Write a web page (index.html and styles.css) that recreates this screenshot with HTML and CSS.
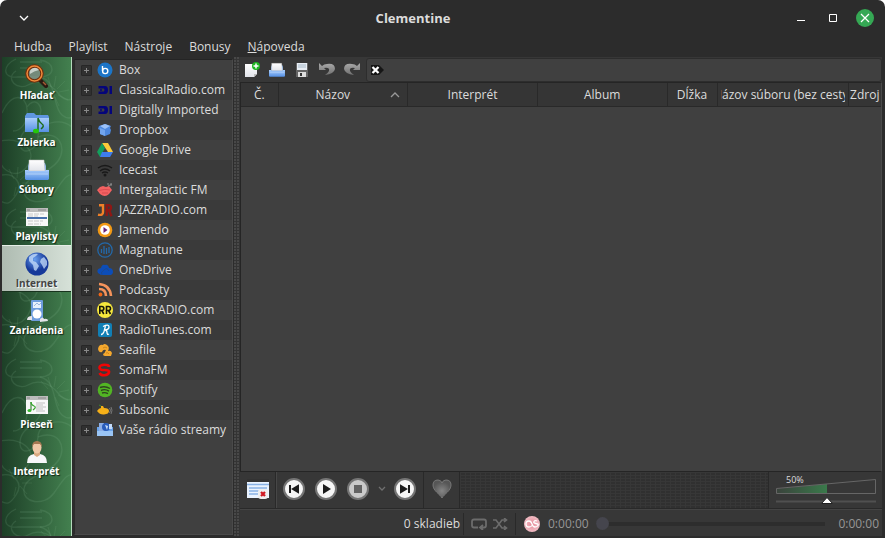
FILE: index.html
```html
<!DOCTYPE html>
<html lang="sk">
<head>
<meta charset="utf-8">
<title>Clementine</title>
<link rel="stylesheet" href="styles.css">
</head>
<body>
<svg class="defs" aria-hidden="true">
  <defs>
    <linearGradient id="blue" x2="0" y2="1"><stop stop-color="#a9cdfb"/><stop offset="1" stop-color="#5590e4"/></linearGradient>
    <linearGradient id="paper" x2="0" y2="1"><stop stop-color="#fff"/><stop offset="1" stop-color="#e2e4ea"/></linearGradient>
    <linearGradient id="grey" x2="0" y2="1"><stop stop-color="#aaa"/><stop offset="1" stop-color="#707070"/></linearGradient>
    <linearGradient id="vol"><stop stop-color="#3a433c"/><stop offset="1" stop-color="#3a7a4b"/></linearGradient>
    <radialGradient id="globe" cx=".4" cy=".3"><stop stop-color="#6aa0ee"/><stop offset="1" stop-color="#16399a"/></radialGradient>
    <radialGradient id="heart" cy=".6"><stop stop-color="#868686"/><stop offset="1" stop-color="#565656"/></radialGradient>
    <radialGradient id="pink"><stop stop-color="#e58a98"/><stop offset="1" stop-color="#f1bcc4"/></radialGradient>
    <pattern id="swirl" width="70" height="150" patternUnits="userSpaceOnUse">
      <g fill="none" stroke="#8ac49a" stroke-opacity=".15" stroke-width="1.3">
        <path d="M14 2C0 8 0 22 16 20h22c16 0 16-15 0-17M14 14c-12 8 2 20 12 14s22-2 30 8 14 8 20 0M18 5h22M18 11h22"/>
        <path d="M38 20c18 4 12 30 22 38s16-2 14-12M0 56c10-22 24-18 25-4s-6 22-14 22M25 50c8-12 18 0 12 10S18 72 18 86s18 8 18-6 22-20 34-10"/>
        <path d="M-2 84c20-4 38 8 28 24s-26 6-28-4M36 80c20-8 30 10 20 24s-32 14-34 28 20 18 30 4 12-20 22-18M0 118c12-2 22 8 14 20s-10 8-16 6"/>
      </g>
      <g fill="none" stroke="#8ac49a" stroke-opacity=".12">
        <path d="M46 32l-7-8m10 6-3-10m6 10 2-11m1 13 8-8m-6 11 10-2m-11 5 10 5m-13-3 4 9M12 122l-5-10m8 9 1-11m2 13 8-7m-6 10 10 0m-12 3 7 8m-11-7-2 9"/>
      </g>
    </pattern>
    <symbol id="i-tray" viewBox="0 0 24 24"><path d="M3 8 4 5h16l1 3v5H3z" fill="#8db6ea"/><path d="M4 2h15l1 11H4z" fill="url(#paper)" stroke="#bbb" stroke-width=".5"/><path d="M0 12h3l1 1h16l1-1h3v9l-1 1H1l-1-1z" fill="url(#blue)"/><path d="M1 16h22" stroke="#c4dcfc" stroke-width=".7"/></symbol>
    <symbol id="i-di" viewBox="0 0 16 16"><path d="M1.500 4H8q3 0 3 4t-3 4H1.500V9.500H7q1-1.500 0-3H1.500zM12.500 4H15v8h-2.500z" fill="#05057a"/><path d="M3 7.300h2v1.400H3z" fill="#05057a"/></symbol>
  </defs>
</svg>
<div class="window">
  <header class="titlebar">
    <button class="plain" aria-label="Menu okna"><svg width="10" height="6" viewBox="0 0 10 6"><path d="M1 1l4 4 4-4" fill="none" stroke="#fff" stroke-width="1.3"/></svg></button>
    <h1>Clementine</h1>
    <div class="winbuttons">
      <button class="plain" aria-label="Minimalizovať"><svg width="8" height="8"><path d="M0 6.500h8" stroke="#fff"/></svg></button>
      <button class="plain" aria-label="Maximalizovať"><svg width="8" height="8"><path d="M.5.5h7v7h-7z" fill="none" stroke="#fff"/></svg></button>
      <button class="plain" aria-label="Zavrieť"><svg width="18" height="18"><circle cx="9" cy="9" r="9" fill="#35a854"/><path d="M5 5l8 8M13 5l-8 8" stroke="#fff" stroke-width="1.2"/></svg></button>
    </div>
  </header>
  <nav class="menubar">
    <button>Hudba</button><button>Playlist</button><button>Nástroje</button><button>Bonusy</button><button><u>N</u>ápoveda</button>
  </nav>
  <div class="main">
    <nav class="sidebar">
      <svg class="swirls" aria-hidden="true"><rect width="100%" height="100%" fill="url(#swirl)"/></svg>
      <button class="tab"><svg viewBox="0 0 24 24"><path d="M15 16l6 6" stroke="#2a1b12" stroke-width="4" stroke-linecap="round"/><path d="M18 18l3 3" stroke="#a45c35" stroke-width="1.500"/><circle cx="9.500" cy="9.500" r="7.500" fill="#9aa29c" fill-opacity=".65" stroke="#6e2c0b" stroke-width="3.500"/><circle cx="9.500" cy="9.500" r="7.500" fill="none" stroke="#ee8a3a" stroke-width="1.500"/><path d="M5 10a5 5 0 0 1 9-4q-5 1-9 4" fill="#fff" opacity=".6"/></svg><span>Hľadať</span></button>
      <button class="tab"><svg viewBox="0 0 24 24"><path d="M0 5l2-3h7l2 2h12l1 2v14l-1 1H1l-1-1z" fill="#5f96df"/><path d="M0 7h24v14H0z" fill="url(#blue)"/><path d="M13 7v12M13 7q1 4 4 6t-1 5" fill="none" stroke="#1d6a16" stroke-width="1.400"/><ellipse cx="11" cy="20" rx="3" ry="2.300" fill="#25c80b"/></svg><span>Zbierka</span></button>
      <button class="tab"><svg viewBox="0 0 24 24"><use href="#i-tray"/></svg><span>Súbory</span></button>
      <button class="tab"><svg viewBox="0 0 24 24"><path d="M1 3h22v18H1z" fill="#f8f8f8"/><path d="M1 3h22v4H1z" fill="#bcbcbc"/><path d="M2 5h3M13 5h8" stroke="#888"/><path d="M2 13h20" stroke="#4770ad" stroke-width="2"/><path d="M3 9h16M3 11h10M3 16h15M3 19h13" stroke="#bbb" stroke-width=".8" stroke-dasharray="5 1"/></svg><span>Playlisty</span></button>
      <button class="tab selected"><svg viewBox="0 0 24 24"><circle cx="12" cy="12" r="11.500" fill="url(#globe)"/><path d="M4 5q4-4 9-3l-2 2-3 2v3l3 1 3 4-3 5-2-1-1-5-4-4zM16 7l3-2 3 4v4l-3 4-2-4-2-3z" fill="#c8dffb" opacity=".75"/></svg><span>Internet</span></button>
      <button class="tab"><svg viewBox="0 0 24 24"><rect x="6" y="1" width="12" height="21" rx="1" fill="#6e9ddd"/><path d="M8 3h8v6H8z" fill="#e8f0fc"/><path d="M9 7l3-3 2 2 2-2" stroke="#9bb6de" fill="none"/><circle cx="12" cy="15" r="4.500" fill="#fff"/><path d="M7 17q-5 0-5 4h5M15 20q3-3 4 0 4-1 4 2l-8 1z" fill="#e4e4e8"/></svg><span>Zariadenia</span></button>
      <div class="tabgap"></div>
      <button class="tab"><svg viewBox="0 0 24 24"><path d="M1 3h22v18H1z" fill="#f8f8f8"/><path d="M1 3h22v4H1z" fill="#bcbcbc"/><path d="M2 5h3M13 5h8" stroke="#888"/><path d="M6 9v8" stroke="#1e6b1b"/><path d="M6 9q0 3 3 4t-1 4" fill="none" stroke="#35a52c" stroke-width="1.200"/><ellipse cx="4.500" cy="17.500" rx="2" ry="1.600" fill="#35b52c"/><path d="M11 10h9M11 12h7M11 14h10M11 16h7M11 18h9" stroke="#aaa" stroke-width=".7"/></svg><span>Pieseň</span></button>
      <button class="tab"><svg viewBox="0 0 24 24"><path d="M2 23q0-8 7-9h6q7 1 7 9z" fill="#f7f7f9"/><path d="M9 11h6v4l-3 2-3-2z" fill="#d9a982"/><ellipse cx="12" cy="7.500" rx="4.500" ry="6" fill="#efc8a7"/><path d="M7 7q0-6 5-6t5 6l-2-3H9z" fill="#a57852"/></svg><span>Interprét</span></button>
    </nav>
    <aside class="tree">
      <ul>
        <li><button class="expand" aria-label="Rozbaliť"></button><svg viewBox="0 0 16 16"><circle cx="8" cy="8" r="7.500" fill="#1c75c8"/><path d="M5.500 4v5" stroke="#fff" stroke-width="1.400"/><circle cx="8.200" cy="9" r="2.600" fill="none" stroke="#fff" stroke-width="1.400"/></svg><span>Box</span></li>
        <li><button class="expand" aria-label="Rozbaliť"></button><svg viewBox="0 0 16 16"><use href="#i-di"/></svg><span>ClassicalRadio.com</span></li>
        <li><button class="expand" aria-label="Rozbaliť"></button><svg viewBox="0 0 16 16"><use href="#i-di"/></svg><span>Digitally Imported</span></li>
        <li><button class="expand" aria-label="Rozbaliť"></button><svg viewBox="0 0 16 16"><path d="M2 4l6-2 6 2-1 2 1 2-1 4-5 2-5-2V8L1 7z" fill="#4d88df"/><path d="M3 4l5-2 5 2-5 3z" fill="#9bc1f7"/><path d="M3 6l5 2v6l-5-2z" fill="#72a5ed"/></svg><span>Dropbox</span></li>
        <li><button class="expand" aria-label="Rozbaliť"></button><svg viewBox="0 0 16 16"><path d="M5 1h6l5 9h-5z" fill="#fbcb3b"/><path d="M5 1l3 5-5 9-3-5z" fill="#13a05d"/><path d="M5 10h11l-3 5H3z" fill="#3f7ded"/></svg><span>Google Drive</span></li>
        <li><button class="expand" aria-label="Rozbaliť"></button><svg viewBox="0 0 16 16"><path d="M1 6q7-5 14 0M3 9q5-4 10 0M5 11q3-2 6 0" fill="none" stroke="#191919" stroke-width="1.400"/><circle cx="8" cy="13" r="1.500" fill="#191919"/></svg><span>Icecast</span></li>
        <li><button class="expand" aria-label="Rozbaliť"></button><svg viewBox="0 0 16 16"><path d="M0 8l3-3 3-1 3 1 3-1 3 4-3 4q-4 4-9 0z" fill="#f36262"/><path d="M2 8.500q6-2 11-.5M5 11h6" stroke="#c83b45" fill="none" stroke-width=".6"/><path d="M11 4l4-2M10 2h2M14 4V1" stroke="#8c8c8c"/></svg><span>Intergalactic FM</span></li>
        <li><button class="expand" aria-label="Rozbaliť"></button><svg viewBox="0 0 16 16"><path d="M2 3.200h4v7q0 3.500-5 2.500" fill="none" stroke="#f08028" stroke-width="2.400"/><path d="M9.700 14V3.200h1.800q2.500 0 2.500 2.500t-2.500 2.500H10m2 0 2.500 6" fill="none" stroke="#8f1714" stroke-width="2.400"/></svg><span>JAZZRADIO.com</span></li>
        <li><button class="expand" aria-label="Rozbaliť"></button><svg viewBox="0 0 16 16"><circle cx="8" cy="8" r="7.300" fill="#f39a15"/><circle cx="8" cy="8" r="4.800" fill="#fff"/><path d="M6.500 5l4 3-4 3z" fill="#6a2378"/></svg><span>Jamendo</span></li>
        <li><button class="expand" aria-label="Rozbaliť"></button><svg viewBox="0 0 16 16"><circle cx="8" cy="8" r="7.200" fill="none" stroke="#2369aa" stroke-width="1.300"/><path d="M4.500 7v4M7 4v8M9.500 6v6M12 5v6" stroke="#2369aa" stroke-width="1.300"/></svg><span>Magnatune</span></li>
        <li><button class="expand" aria-label="Rozbaliť"></button><svg viewBox="0 0 16 16"><path d="M1 11q-2-4 3-5 1-4 4-3 3-1 4 3 4 0 4 4 0 2-2 3H4z" fill="#0c4db8"/><path d="M5 13q-2-3 2-5 3-3 5 1" fill="none" stroke="#2a4468" stroke-width=".5"/></svg><span>OneDrive</span></li>
        <li><button class="expand" aria-label="Rozbaliť"></button><svg viewBox="0 0 16 16"><path d="M2 2q11 1 12 12M2 7q7 0 7 7" fill="none" stroke="#f4935b" stroke-width="2.600"/><circle cx="3.500" cy="12.500" r="1.900" fill="#f06718"/></svg><span>Podcasty</span></li>
        <li><button class="expand" aria-label="Rozbaliť"></button><svg viewBox="0 0 16 16"><circle cx="8" cy="8" r="8" fill="#f7e83c"/><path d="M2.800 12V4.500h2q2 0 2 2t-2 2h-2m2 0 2 3.500M9.500 12V4.500h2q2 0 2 2t-2 2h-2m2 0 2 3.500" fill="none" stroke="#17170a" stroke-width="1.600"/></svg><span>ROCKRADIO.com</span></li>
        <li><button class="expand" aria-label="Rozbaliť"></button><svg viewBox="0 0 16 16"><rect x="1" y="1" width="14" height="14" rx="2" fill="#117fb5"/><path d="M4 12.500q2 0 3-3L8.500 4M6 4.500q6-3 6 .5 0 2.500-4 3 2 0 2 2.500t2 1.500" fill="none" stroke="#fff" stroke-width="1.300"/></svg><span>RadioTunes.com</span></li>
        <li><button class="expand" aria-label="Rozbaliť"></button><svg viewBox="0 0 16 16"><path d="M1 7q1-5 5-4 1-2 4 0 3 2 1 6 3-1 4 2l-1 3H8q-2 0-2-2 2-1 3-4-3-1-4 2-3 1-4-3z" fill="#f4a82e"/><path d="M6 6q2-2 4 0M9 11q2-1 3 1" stroke="#c07c18" fill="none" stroke-width=".8"/></svg><span>Seafile</span></li>
        <li><button class="expand" aria-label="Rozbaliť"></button><svg viewBox="0 0 16 16"><path d="M12 5q0-2.300-4.500-2.300T2.500 5.300 7.500 8t4.500 2.500-4.500 2.700T2.500 11" fill="none" stroke="#ee0505" stroke-width="2.600"/></svg><span>SomaFM</span></li>
        <li><button class="expand" aria-label="Rozbaliť"></button><svg viewBox="0 0 16 16"><circle cx="8" cy="8" r="7.300" fill="#52b524"/><path d="M3 5.500q5-2 10 1M4 8.500q4-2 8 .7M5 11q3-1 6 .7" fill="none" stroke="#2d441f" stroke-width="1.400"/></svg><span>Spotify</span></li>
        <li><button class="expand" aria-label="Rozbaliť"></button><svg viewBox="0 0 16 16"><path d="M0 9q2-3 4-3V4h2l1 2q5 0 5 3t-5 3.500Q3 13 0 9z" fill="#f6b018"/><path d="M4 4l-2-1" stroke="#3b8d2d"/><path d="M12.500 6q2 2 0 5M14 5q2 3 0 7" fill="none" stroke="#777"/></svg><span>Subsonic</span></li>
        <li><button class="expand" aria-label="Rozbaliť"></button><svg viewBox="0 0 16 16"><path d="M0 5h16v9H0z" fill="#6aa4ea"/><path d="M2 1h5v8H2z" fill="#8caee5"/><circle cx="9" cy="5" r="4" fill="#2a5dbb"/><path d="M8 3l3 1-1 4M12 2h3v5h-3z" fill="#c4dcfa"/><path d="M0 9h16v5H0z" fill="#9ac5f5"/></svg><span>Vaše rádio streamy</span></li>
      </ul>
    </aside>
    <div class="splitter"></div>
    <main class="content">
      <div class="toolbar">
        <div class="tools">
          <button aria-label="Nový playlist"><svg viewBox="0 0 16 16"><path d="M1 2h12v10l-3 3H1z" fill="url(#paper)"/><path d="M10 15v-3h3z" fill="#bbb"/><circle cx="12" cy="4" r="4" fill="#1fb522"/><path d="M12 1.500v5M9.500 4h5" stroke="#fff" stroke-width="1.500"/></svg></button>
          <button aria-label="Otvoriť playlist"><svg viewBox="0 0 24 24"><use href="#i-tray"/></svg></button>
          <button aria-label="Uložiť playlist"><svg viewBox="0 0 16 16"><path d="M2 1h12v14H2z" fill="#656565"/><path d="M3 1h10v7H3z" fill="#e8eef5"/><path d="M4 3h8M4 5h8" stroke="#a8bac9"/><path d="M4 10h8v5H4z" fill="#ddd"/><path d="M6 11h2v3H6z" fill="#333"/></svg></button>
          <button aria-label="Späť"><svg viewBox="0 0 16 16"><path d="M0 1v7h7L5 6q6-1 5 3-1 2-4 4 9-1 10-6 0-6-8-5-3 0-5 2z" fill="url(#grey)"/></svg></button>
          <button aria-label="Znovu"><svg viewBox="0 0 16 16"><path d="M16 1v7H9l2-2Q5 5 6 9q1 2 4 4Q1 12 0 7q0-6 8-5 3 0 5 2z" fill="url(#grey)"/></svg></button>
        </div>
        <label class="filter"><svg viewBox="0 0 16 10"><path d="M0 0h8l5 5-5 5H0z" fill="#161616"/><path d="M1.500 2l6 6M7.500 2l-6 6" stroke="#fff" stroke-width="2.300"/></svg><input type="text" aria-label="Filter playlistu"></label>
      </div>
      <div class="playlist">
        <table>
          <colgroup><col class="c-num"><col class="c-wide"><col class="c-wide"><col class="c-wide"><col class="c-len"><col class="c-file"><col class="c-src"></colgroup>
          <thead><tr>
            <th><div>Č.</div></th>
            <th><div class="sorted"><span>Názov</span><svg width="10" height="6"><path d="M1 5l4-4 4 4" fill="none" stroke="#999" stroke-width="1.300"/></svg></div></th>
            <th><div>Interprét</div></th>
            <th><div>Album</div></th>
            <th><div>Dĺžka</div></th>
            <th><div>Názov súboru (bez cesty)</div></th>
            <th><div>Zdroj</div></th>
          </tr></thead>
        </table>
      </div>
      <div class="player">
        <div class="group"><button aria-label="Vyčistiť playlist"><svg width="24" height="24" viewBox="0 0 24 24"><path d="M1 2h22v19H1z" fill="#eaf3ff"/><path d="M1 2h22v3H1z" fill="#333"/><path d="M1 7.500h22M3 11h18M3 14h18M3 17h18" stroke="#89b2e5" stroke-width="1.500"/><rect x="12" y="12" width="10" height="10" rx="3" fill="#eee"/><path d="M15 15l4 4M19 15l-4 4" stroke="#cf1720" stroke-width="2.300"/></svg></button></div>
        <div class="group transport">
          <button aria-label="Predchádzajúca"><svg width="22" height="22" viewBox="0 0 22 22"><circle cx="11" cy="11" r="10" fill="#f6f6f6" stroke="#757575" stroke-width="2"/><path d="M7 7v8M15 8v6l-5-3z" fill="#1b1b1b" stroke="#1b1b1b" stroke-width="2"/></svg></button>
          <button aria-label="Prehrať"><svg width="22" height="22" viewBox="0 0 22 22"><circle cx="11" cy="11" r="10" fill="#f6f6f6" stroke="#757575" stroke-width="2"/><path d="M8 6l8 5-8 5z" fill="#1b1b1b"/></svg></button>
          <button aria-label="Zastaviť"><svg width="22" height="22" viewBox="0 0 22 22"><circle cx="11" cy="11" r="10" fill="#cacaca" stroke="#757575" stroke-width="2"/><path d="M7 7h8v8H7z" fill="#636363"/></svg></button>
          <button class="drop" aria-label="Možnosti zastavenia"><svg width="8" height="6"><path d="M1 1l3 3 3-3" fill="none" stroke="#707070" stroke-width="1.300"/></svg></button>
          <button aria-label="Nasledujúca"><svg width="22" height="22" viewBox="0 0 22 22"><circle cx="11" cy="11" r="10" fill="#f6f6f6" stroke="#757575" stroke-width="2"/><path d="M15 7v8M7 8v6l5-3z" fill="#1b1b1b" stroke="#1b1b1b" stroke-width="2"/></svg></button>
        </div>
        <div class="group love"><button aria-label="Obľúbiť"><svg width="20" height="20" viewBox="0 0 20 20"><path d="M10 19C8 15 1 12 1 6q0-5 5-5 3 0 4 3 1-3 4-3 5 0 5 5c0 6-7 9-9 13z" fill="url(#heart)" stroke="#777"/></svg></button></div>
        <div class="analyzer"></div>
        <div class="volume"><span>50%</span>
          <svg width="100" height="28" viewBox="0 0 100 28"><path d="M1 10l50-5v10H1z" fill="url(#vol)"/><path d="M.5 9.500L99.500.500v14H.5z" fill="none" stroke="#666"/><path d="M0 22.500h100" stroke="#505050" stroke-width="2"/><path d="M51 18.500l5.500 6H45.500z" fill="#fff" stroke="#222"/></svg>
        </div>
      </div>
      <div class="status">
        <span class="count">0 skladieb</span>
        <div class="modes">
          <button aria-label="Opakovanie"><svg width="16" height="12"><path d="M7 9.500H3q-2 0-2-2v-4q0-2 2-2h10q2 0 2 2v4q0 2-2 2h-3M12 7l-3 2.500 3 2.500" fill="none" stroke="#6c6c6c" stroke-width="1.800"/></svg></button>
          <button aria-label="Náhodne"><svg width="16" height="12"><path d="M1 2h3l6 8h4M1 10h3l6-8h4M12 0l2.500 2L12 4M12 8l2.500 2-2.500 2" fill="none" stroke="#6c6c6c" stroke-width="1.600"/></svg></button>
        </div>
        <button class="scrobble" aria-label="Last.fm"><svg width="16" height="16"><circle cx="8" cy="8" r="8" fill="url(#pink)"/><path d="M8 9.500q-1 1.500-3 1.500-3 0-3-3t3-3q2 0 3 3t3 3 3-1.500-2-2-2-2 3-.500" fill="none" stroke="#fff" stroke-width="1.300"/></svg></button>
        <span class="time">0:00:00</span>
        <input type="range" min="0" max="100" value="0" disabled aria-label="Pozícia">
        <span class="time">0:00:00</span>
      </div>
    </main>
  </div>
</div>
</body>
</html>
```
FILE: styles.css
```css
* { box-sizing: border-box; }

body {
  margin: 0;
  background: #fff;
  color: #dcdcdc;
  font: 12px/20px "Open Sans", "Noto Sans", sans-serif;
}

button, input { font: inherit; color: inherit; }

button {
  display: flex;
  align-items: center;
  justify-content: center;
  padding: 0;
  border: 0;
  background: none;
}

.defs { position: absolute; width: 0; height: 0; }

.window {
  display: flex;
  flex-direction: column;
  min-height: 100vh;
  background: #2c2c2c;
  border-radius: 7px 7px 0 0;
}

.titlebar {
  display: flex;
  align-items: center;
  height: 36px;
  padding: 0 11px 0 19px;
}
.titlebar h1 {
  flex: 1;
  margin: 0;
  font-size: 13px;
  line-height: 20px;
  text-align: center;
}
.winbuttons { display: flex; align-items: center; gap: 24px; }
.winbuttons button:last-child { margin-left: -5px; }

.menubar { display: flex; gap: 17px; height: 21px; padding: 0 14px; }

.main { display: flex; flex: 1; padding: 0 3px 2px 2px; }

.sidebar {
  position: relative;
  flex: 0 0 70px;
  border-right: 1px solid #b5dcbd;
  background: linear-gradient(90deg, #1d3f27, #43804f);
}
.swirls { position: absolute; inset: 0; width: 100%; height: 100%; }
.tab {
  position: relative;
  flex-direction: column;
  width: 100%;
  height: 47px;
  padding-top: 4px;
  color: #fff;
  font-size: 10px;
  font-weight: bold;
  line-height: 14px;
  text-shadow: 1px 1px 1px #102516;
}
.tab svg { width: 24px; height: 24px; }
.tab.selected {
  border-top: 1px solid #e6eee7;
  border-bottom: 1px solid #18331e;
  background: linear-gradient(90deg, #aebbb1, #d6e1d8);
  color: #444;
  text-shadow: 1px 1px 1px #fff;
}
.tabgap { height: 47px; }

.tree {
  flex: 0 0 159px;
  margin: 2px 1px 1px 2px;
  border: 1px solid #4a4a4a;
  border-top-color: #242424;
  border-left-color: #2b2b2b;
  background: #404040;
}
.tree ul { margin: 0; padding: 0; list-style: none; }
.tree li { display: flex; align-items: center; height: 20px; padding-left: 6px; white-space: nowrap; }
.tree li:nth-child(even) { background: #3a3a3a; }
.tree li svg { flex: none; width: 16px; height: 16px; margin: 0 6px 0 5px; }
.expand {
  width: 11px;
  height: 11px;
  border: 1px solid #272727;
  border-radius: 1px;
  background:
    linear-gradient(#8a8a8a, #8a8a8a) center / 5px 1px no-repeat,
    linear-gradient(#8a8a8a, #8a8a8a) center / 1px 5px no-repeat,
    #303030;
}

.splitter {
  flex: 0 0 6px;
  background: radial-gradient(circle at 1px 1px, #484848 1px, #343434 1px) 0 0 / 3px 3px;
}

.content {
  display: flex;
  flex: 1;
  flex-direction: column;
  min-width: 0;
  background: #373737;
}

.toolbar { display: flex; align-items: center; height: 25px; padding-left: 4px; }
.tools { display: flex; flex: 0 0 122px; gap: 9px; }
.tools svg { width: 16px; height: 16px; }
.filter {
  display: flex;
  flex: 1;
  align-items: center;
  height: 24px;
  padding-left: 4px;
  border: 1px solid #2d2d2d;
  border-radius: 3px;
  background: #404040;
}
.filter svg { width: 16px; height: 10px; }
.filter input { flex: 1; min-width: 0; border: 0; outline: 0; background: none; }

.playlist { flex: 1; border: 1px solid #252525; border-right-color: #4a4a4a; background: #404040; }
table { width: 100%; table-layout: fixed; border-collapse: collapse; }
th {
  height: 23px;
  padding: 1px 3px 0;
  border-right: 1px solid #292929;
  border-bottom: 1px solid #292929;
  background: #353535;
  font-weight: normal;
}
th:last-child { padding: 1px 0 0; border-right: 0; }
th div { display: flex; justify-content: center; overflow: hidden; white-space: nowrap; }
.sorted { align-items: center; }
.sorted span { flex: 1; padding-right: 6px; text-align: center; }
.sorted svg { flex: none; margin-right: 4px; }
.c-num { width: 37px; }
.c-wide { width: 20.3%; }
.c-len { width: 50px; }
.c-file { width: 20.5%; }
.c-src { width: 33px; }

.player { display: flex; height: 37px; border-bottom: 1px solid #292929; box-shadow: 0 1px #444; }
.group { display: flex; align-items: center; padding: 0 5px 2px 6px; border-right: 1px solid #292929; }
.transport { gap: 10px; padding: 0 7px 2px 6px; border-left: 1px solid #474747; }
.drop { width: 9px; margin: 0 -2px; }
.love { padding: 0 7px 2px 8px; }
.analyzer {
  flex: 1;
  background:
    linear-gradient(90deg, #373737 1px, transparent 1px) 0 0 / 5px 3px,
    linear-gradient(#373737 1px, #303030 1px) 0 0 / 5px 3px;
}
.volume {
  display: flex;
  flex-direction: column;
  width: 114px;
  padding: 1px 6px 0 7px;
  border-left: 1px solid #292929;
}
.volume span { height: 6px; padding-left: 10px; font-size: 9px; line-height: 13px; }

.status { display: flex; align-items: center; height: 27px; padding: 2px 3px 0 0; color: #969696; }
.count { flex: 0 0 223px; padding-right: 3px; color: #dcdcdc; text-align: right; }
.modes {
  display: flex;
  gap: 5px;
  margin-right: 8px;
  padding: 5px 7px;
  border-left: 1px solid #292929;
  border-right: 1px solid #292929;
}
.scrobble { margin-right: 8px; }
.status input {
  flex: 1;
  min-width: 0;
  height: 14px;
  margin: 0 13px 0 7px;
  appearance: none;
  background: linear-gradient(#2d2d2d, #2d2d2d) center / 100% 4px no-repeat;
}
.status input::-webkit-slider-thumb {
  appearance: none;
  width: 13px;
  height: 13px;
  border-radius: 50%;
  background: #45454d;
}
```
